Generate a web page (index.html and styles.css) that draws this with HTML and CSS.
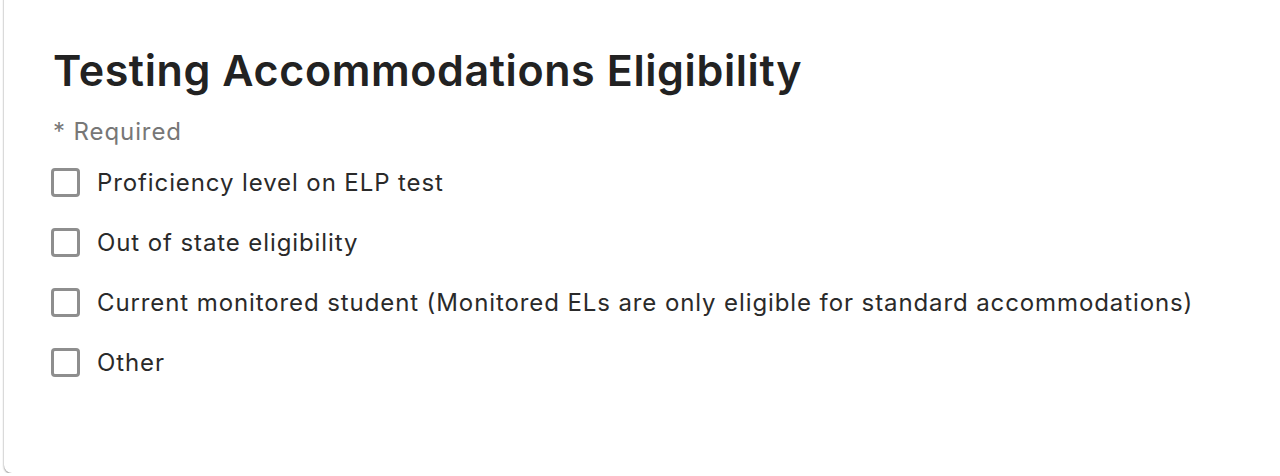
FILE: index.html
```html
<!DOCTYPE html>
<html lang="en">
<head>
    <meta charset="UTF-8">
    <meta name="viewport" content="width=device-width, initial-scale=1.0">
    <title>Testing Accommodations Eligibility</title>
    <link rel="stylesheet" href="styles.css">
</head>
<body>
    <div class="card">
        <h1 class="card-title">Testing Accommodations Eligibility</h1>
        <p class="required-note">* Required</p>

        <ul class="option-list">
            <li class="option">
                <label><input type="checkbox" name="eligibility" value="elp"><span class="box"></span>Proficiency level on ELP test</label>
            </li>
            <li class="option">
                <label><input type="checkbox" name="eligibility" value="out-of-state"><span class="box"></span>Out of state eligibility</label>
            </li>
            <li class="option">
                <label><input type="checkbox" name="eligibility" value="monitored"><span class="box"></span>Current monitored student (Monitored ELs are only eligible for standard accommodations)</label>
            </li>
            <li class="option">
                <label><input type="checkbox" name="eligibility" value="other"><span class="box"></span>Other</label>
            </li>
        </ul>
    </div>
</body>
</html>
```

FILE: styles.css
```css
body {
    margin: 0;
    background: #ffffff;
    font-family: Inter, Lato, sans-serif;
    font-variant-ligatures: none;
    color: #222222;
    overflow: hidden;
}

.card {
    margin: -10px -12px 0 4px;
    height: 483px;
    box-sizing: border-box;
    padding: 53px 0 0 49px;
    background: #ffffff;
    border-radius: 8px;
    box-shadow: 0 1px 2px rgba(0, 0, 0, 0.45), 0 0 3px rgba(0, 0, 0, 0.08);
}

.card-title {
    margin: 0;
    font-size: 43px;
    font-weight: 600;
    line-height: 54px;
    letter-spacing: 0.6px;
    color: #222222;
}

.required-note {
    margin: 20px 0 5px 0;
    font-size: 24px;
    line-height: 30px;
    letter-spacing: 0.9px;
    color: #777777;
}

.option-list {
    list-style: none;
    margin: 0;
    padding: 0;
}

.option label {
    display: flex;
    align-items: center;
    gap: 17px;
    height: 60px;
    font-size: 24px;
    letter-spacing: 0.9px;
    color: #2a2a2a;
    cursor: pointer;
}

.option input {
    display: none;
}

.box {
    width: 23px;
    height: 23px;
    border: 3px solid #8e8e8e;
    border-radius: 4px;
    flex-shrink: 0;
    margin-left: -2px;
}

.option input:checked + .box {
    background: #2a2a2a;
}
```
